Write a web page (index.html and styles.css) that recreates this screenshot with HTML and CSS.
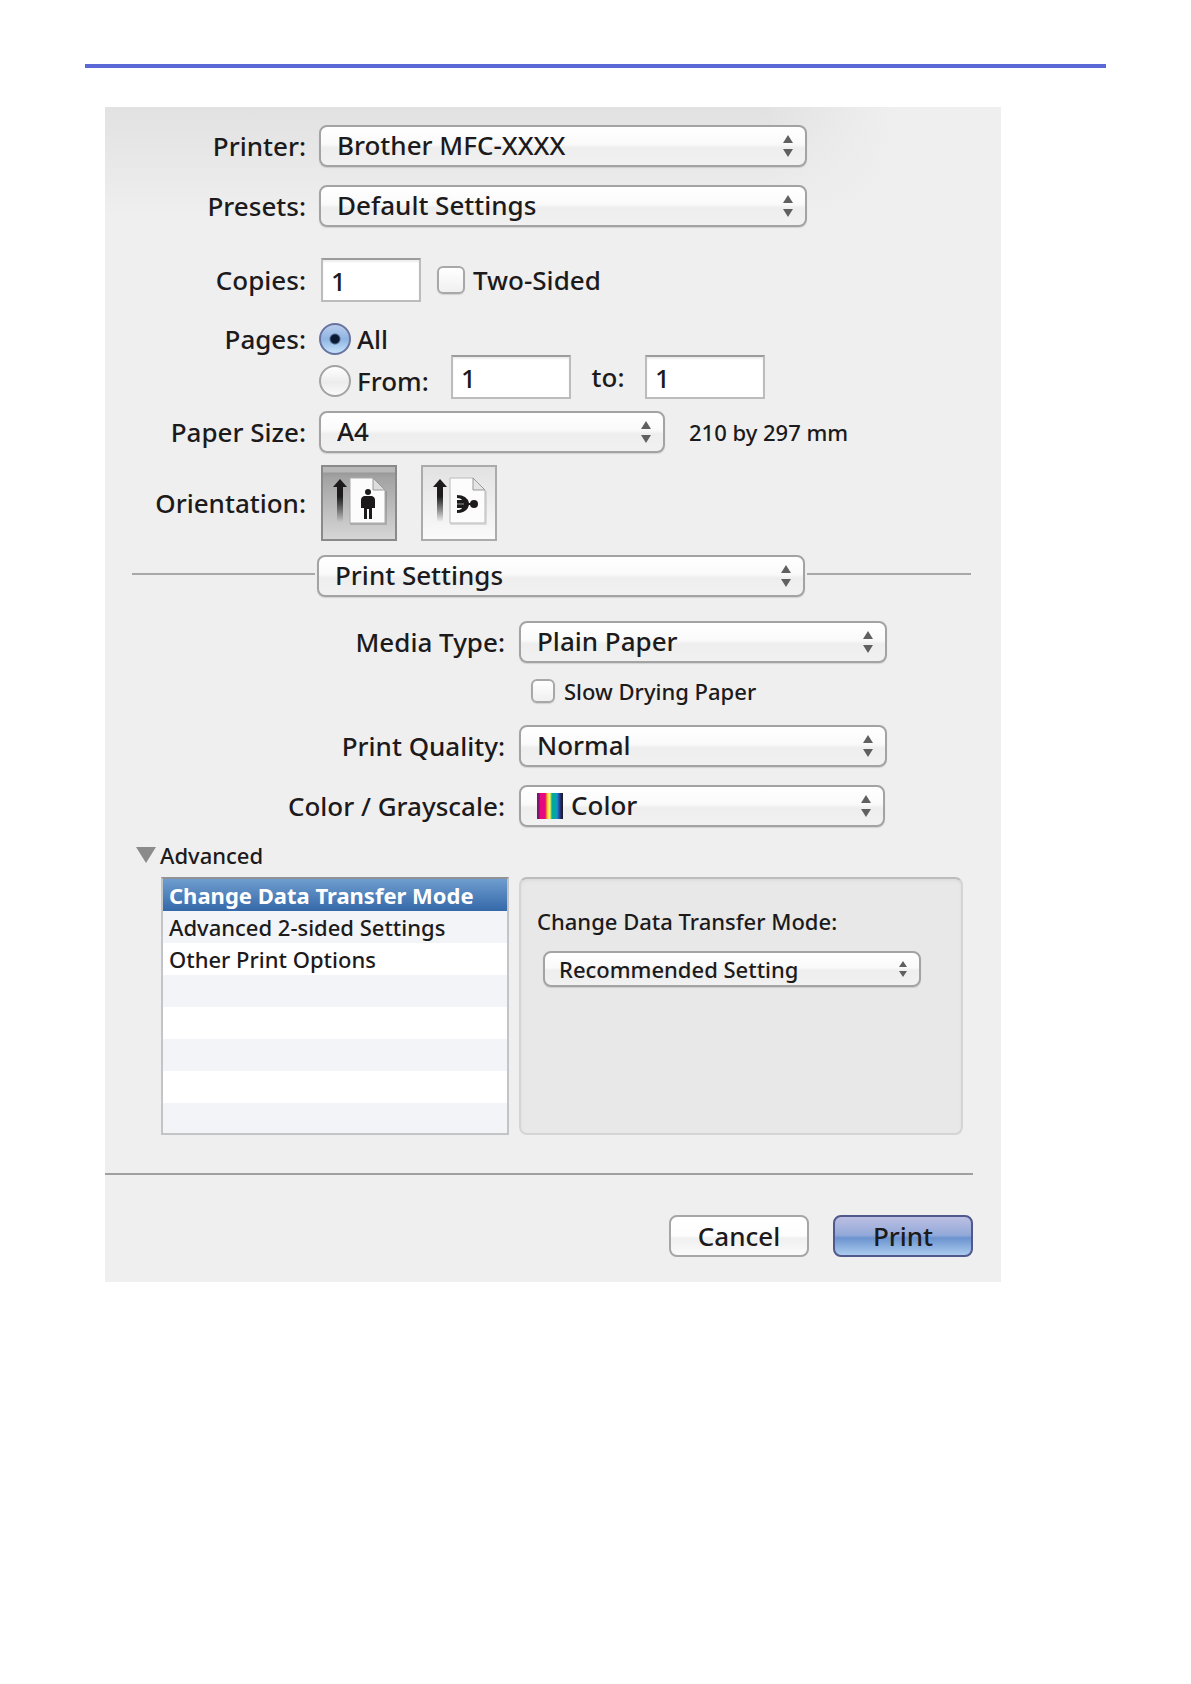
FILE: index.html
```html
<!DOCTYPE html>
<html lang="en">
  <head>
    <meta charset="UTF-8" />
    <meta name="viewport" content="width=device-width, initial-scale=1.0" />
    <title>Print</title>
    <link rel="stylesheet" href="styles.css">
  </head>
  <body>
    <div class="page">
      <form class="dialog">
        <!-- printer and page setup -->
        <div class="row">
          <label class="label" for="printer">Printer:</label>
          <select class="select" id="printer"><option>Brother MFC-XXXX</option></select>
        </div>
        <div class="row presets">
          <label class="label" for="presets">Presets:</label>
          <select class="select" id="presets"><option>Default Settings</option></select>
        </div>
        <div class="row copies">
          <label class="label" for="copies">Copies:</label>
          <input class="text copies-input" type="text" id="copies" value="1" />
          <input class="check" type="checkbox" id="two-sided" />
          <label for="two-sided">Two-Sided</label>
        </div>
        <div class="row pages">
          <span class="label">Pages:</span>
          <input class="radio" type="radio" name="pages" id="all" checked />
          <label for="all">All</label>
        </div>
        <div class="row range">
          <span class="label"></span>
          <div class="from">
            <input class="radio" type="radio" name="pages" id="from" />
            <label for="from">From:</label>
          </div>
          <input class="text" type="text" aria-label="From page" value="1" />
          <label class="to" for="to">to:</label>
          <input class="text" type="text" id="to" value="1" />
        </div>
        <div class="row paper">
          <label class="label" for="paper">Paper Size:</label>
          <select class="select paper-select" id="paper"><option>A4</option></select>
          <span class="small">210 by 297 mm</span>
        </div>
        <div class="row orientation">
          <span class="label">Orientation:</span>
          <button class="orient active" type="button" aria-label="Portrait">
            <svg width="72" height="72" viewBox="0 0 72 72">
              <defs>
                <linearGradient id="fade" x1="0" y1="0" x2="0" y2="1">
                  <stop offset="0.4" stop-color="#1c1a1b" />
                  <stop offset="1" stop-color="#1c1a1b" stop-opacity="0" />
                </linearGradient>
              </defs>
              <path d="M17 12 L24 20 H20 V55 H14 V20 H10 Z" fill="url(#fade)" />
              <path d="M27 57 H63 V24" fill="none" stroke="#000" stroke-opacity="0.15" stroke-width="2" />
              <path d="M27 11 H50 L62 23 V56 H27 Z" fill="#fcfcfc" stroke="#aaa" />
              <path d="M50 11 V23 H62 Z" fill="#ddd" stroke="#999" />
              <circle cx="45" cy="25" r="3" fill="#1c1a1b" />
              <path d="M41 29 H49 Q52 30 52 33 V41 H49 V52 H46 V42 H44 V52 H41 V41 H38 V33 Q38 30 41 29 Z" fill="#1c1a1b" />
            </svg>
          </button>
          <button class="orient" type="button" aria-label="Landscape">
            <svg width="72" height="72" viewBox="0 0 72 72">
              <path d="M17 12 L24 20 H20 V55 H14 V20 H10 Z" fill="url(#fade)" />
              <path d="M27 57 H63 V24" fill="none" stroke="#000" stroke-opacity="0.1" stroke-width="2" />
              <path d="M27 11 H50 L62 23 V56 H27 Z" fill="#fcfcfc" stroke="#bbb" />
              <path d="M50 11 V23 H62 Z" fill="#e4e4e4" stroke="#999" />
              <circle cx="51" cy="37" r="4" fill="#1c1a1b" />
              <path d="M34 28 Q44 28 46 36 H48 V38 H46 Q44 46 34 46 V43 Q38 43 39 41 H34 V33 H39 Q38 31 34 31 Z" fill="#1c1a1b" />
              <path d="M34 37 H41" stroke="#999" stroke-width="1" />
            </svg>
          </button>
        </div>

        <!-- settings pane -->
        <div class="divider">
          <select class="select" aria-label="Settings pane"><option>Print Settings</option></select>
        </div>
        <div class="row wide">
          <label class="label" for="media">Media Type:</label>
          <select class="select" id="media"><option>Plain Paper</option></select>
        </div>
        <div class="row wide slow">
          <span class="label"></span>
          <input class="check small-check" type="checkbox" id="slow" />
          <label class="small" for="slow">Slow Drying Paper</label>
        </div>
        <div class="row wide quality">
          <label class="label" for="quality">Print Quality:</label>
          <select class="select" id="quality"><option>Normal</option></select>
        </div>
        <div class="row wide color">
          <label class="label" for="color">Color / Grayscale:</label>
          <select class="select color-select" id="color"><option>Color</option></select>
        </div>

        <details class="advanced small" open>
          <summary>
            <svg width="20" height="16" viewBox="0 0 20 16"><path d="M0 0 H20 L10 16 Z" fill="#8b8b8b" /></svg>
            Advanced
          </summary>
          <div class="panes">
            <ul class="list" role="listbox" aria-label="Advanced">
              <li class="selected" role="option" aria-selected="true">Change Data Transfer Mode</li>
              <li role="option">Advanced 2-sided Settings</li>
              <li role="option">Other Print Options</li>
            </ul>
            <div class="panel">
              <label for="transfer">Change Data Transfer Mode:</label>
              <select class="select small-select" id="transfer"><option>Recommended Setting</option></select>
            </div>
          </div>
        </details>

        <div class="buttons">
          <button class="btn" type="button">Cancel</button>
          <button class="btn primary" type="submit">Print</button>
        </div>
      </form>
    </div>
  </body>
</html>
```
FILE: styles.css
```css
* {
  box-sizing: border-box;
}

body {
  margin: 0;
  background-color: #fff;
  color: #1c1a1b;
  font-family: "Noto Sans", "Open Sans", sans-serif;
  font-size: 26px;
  font-weight: 500;
  line-height: 32px;
}

.page {
  margin: 64px 85px 0;
  border-top: 4px solid #5b69d6;
  padding: 39px 20px;
}

.dialog {
  max-width: 896px;
  padding: 18px 28px 25px 0;
  background: linear-gradient(to right, rgba(239, 239, 239, 0) 74%, #efefef 88%),
    linear-gradient(#e2e2e2, #e4e4e4 20px, #efefef 110px);
}

/* form rows */
.row {
  display: flex;
  align-items: center;
}

.label {
  width: 201px;
  margin-right: 13px;
  flex-shrink: 0;
  text-align: right;
}

.wide .label {
  width: 400px;
  margin-right: 14px;
}

.presets,
.color {
  margin-top: 18px;
}

.copies {
  margin-top: 31px;
}

.pages {
  margin-top: 21px;
}

.quality {
  margin-top: 22px;
}

.paper,
.orientation {
  margin-top: 12px;
}

.slow {
  margin-top: 16px;
  line-height: 24px;
}

.small {
  font-size: 22px;
}

/* controls */
.select {
  appearance: none;
  width: 488px;
  height: 42px;
  padding: 0 36px 2px 16px;
  border: 2px solid #a3a3a3;
  border-radius: 8px;
  background: url("data:image/svg+xml,%3Csvg xmlns='http://www.w3.org/2000/svg' width='10' height='22'%3E%3Cpath d='M5 0L10 8H0ZM5 22L0 14H10Z' fill='%23606060'/%3E%3C/svg%3E") right 12px center no-repeat,
    linear-gradient(#fff, #fafafa 45%, #eee 55%, #f1f1f1);
  box-shadow: 0 1px 1px rgba(0, 0, 0, 0.12);
  color: inherit;
  font: inherit;
}

.wide .select {
  width: 368px;
}

.paper-select {
  width: 346px;
  margin-right: 24px;
}

.wide .color-select {
  width: 366px;
  padding-left: 50px;
  background: url("data:image/svg+xml,%3Csvg xmlns='http://www.w3.org/2000/svg' width='10' height='22'%3E%3Cpath d='M5 0L10 8H0ZM5 22L0 14H10Z' fill='%23606060'/%3E%3C/svg%3E") right 12px center no-repeat,
    linear-gradient(to right, #7d1670 2px, #e5097f 3px 8px, #ee4035 9px, #f9b233 10px, #fff352 12px 13px, #7fc878 14px, #00a99d 15px 18px, #1a93c8 20px, #244fa8 22px, #23235f 24px, #1c1a1b) 16px 6px / 26px 26px no-repeat,
    linear-gradient(#fff, #fafafa 45%, #eee 55%, #f1f1f1);
}

.text {
  width: 120px;
  height: 44px;
  padding: 2px 8px 0;
  border: 2px solid #bcbcbc;
  border-top-color: #9c9c9c;
  border-radius: 0;
  background-color: #fff;
  box-shadow: inset 0 2px 2px #eee;
  color: inherit;
  font: inherit;
}

.copies-input {
  width: 100px;
  margin: 0 16px 0 2px;
}

.check {
  appearance: none;
  width: 28px;
  height: 28px;
  margin: 0 8px 0 0;
  border: 2px solid #a8a8a8;
  border-radius: 6px;
  background: linear-gradient(#fff, #f0f0f0);
  box-shadow: 0 1px 1px rgba(0, 0, 0, 0.12);
}

.small-check {
  width: 24px;
  height: 24px;
  margin: 0 9px 0 12px;
}

.radio {
  appearance: none;
  width: 32px;
  height: 32px;
  margin: 0 6px 0 0;
  border: 2px solid #a3a3a3;
  border-radius: 50%;
  background: linear-gradient(#fff, #ececec 55%, #fafafa);
}

.radio:checked {
  border-color: #6873a0;
  background: radial-gradient(circle, #0a1a33 4px, rgba(10, 26, 51, 0) 6px),
    linear-gradient(#b9cdec, #8fb4e2 50%, #c4e2fb);
}

.from {
  display: flex;
  align-items: center;
  align-self: flex-end;
  width: 132px;
  padding-bottom: 2px;
}

.to {
  width: 74px;
  text-align: center;
}

.orient {
  width: 76px;
  height: 76px;
  margin: 0 22px 0 2px;
  padding: 0;
  border: 2px solid #ababab;
  background: linear-gradient(#e2e2e2, #fafafa);
}

.orient.active {
  border-color: #8a8a8a;
  background: linear-gradient(#b8b8b8 5px, #999 6px, #a2a2a2 10px, #d6d6d6);
}

.orient svg {
  display: block;
}

/* line running either side of the pane menu */
.divider {
  display: flex;
  align-items: center;
  gap: 2px;
  margin: 14px 2px 24px 27px;
}

.divider::before,
.divider::after {
  content: "";
  height: 2px;
  margin-bottom: 4px;
  background-color: #a8a8a8;
}

.divider::before {
  width: 183px;
}

.divider::after {
  flex: 1;
}

/* advanced section */
.advanced {
  margin-top: 14px;
}

.advanced summary {
  display: flex;
  align-items: center;
  gap: 4px;
  height: 28px;
  padding-left: 31px;
}

.panes {
  display: flex;
  gap: 10px;
  min-height: 258px;
  margin: 8px 10px 0 56px;
}

.list {
  width: 348px;
  margin: 0;
  padding: 0;
  border: 2px solid #c2c4c8;
  border-top-color: #8f9398;
  background: repeating-linear-gradient(#fff 0 32px, #f2f4f8 32px 64px);
  list-style: none;
}

.list li {
  height: 32px;
  padding-left: 6px;
}

.list .selected {
  background: linear-gradient(#6f9dcf, #3468a8);
  color: #fff;
  font-weight: bold;
}

.panel {
  flex: 1;
  padding: 26px 16px;
  border: 2px solid #d4d4d4;
  border-top-color: #bcbcbc;
  border-radius: 8px;
  background-color: #e8e8e8;
  box-shadow: inset 0 2px 3px #ddd;
}

.panel label {
  display: block;
}

.small-select {
  width: 378px;
  height: 36px;
  margin: 14px 0 0 6px;
  padding-left: 14px;
  background: url("data:image/svg+xml,%3Csvg xmlns='http://www.w3.org/2000/svg' width='8' height='16'%3E%3Cpath d='M4 0L8 6H0ZM4 16L0 10H8Z' fill='%23606060'/%3E%3C/svg%3E") right 12px center no-repeat,
    linear-gradient(#fff, #fafafa 45%, #eee 55%, #f1f1f1);
}

/* footer */
.buttons {
  display: flex;
  justify-content: flex-end;
  gap: 24px;
  margin-top: 38px;
  padding-top: 40px;
  border-top: 2px solid #a0a0a0;
}

.btn {
  width: 140px;
  height: 42px;
  padding: 0;
  border: 2px solid #a6a6a6;
  border-radius: 8px;
  background: linear-gradient(#fff, #fdfdfd 50%, #f0f0f0 55%, #fafafa);
  color: inherit;
  font: inherit;
  line-height: 36px;
}

.primary {
  border-color: #50588c;
  background: linear-gradient(#bcbfe2, #92a9d9 48%, #6b93cf 55%, #abcbee);
}
```
